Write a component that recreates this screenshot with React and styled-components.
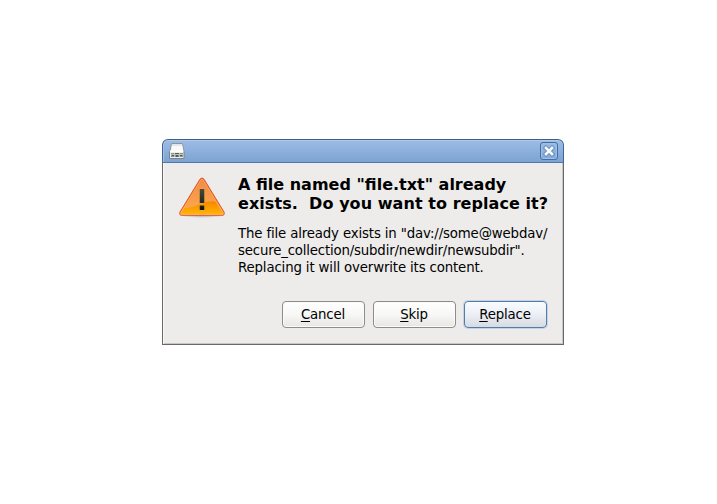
import React from "react";
import styled, { createGlobalStyle } from "styled-components";

const GlobalStyle = createGlobalStyle`
  * { box-sizing: border-box; }
  body { margin: 0; background: #fff; }
`;

const Desktop = styled.main`
  height: 504px;
  padding: 139px 0 0 162px;
  overflow: hidden;
  font-family: "DejaVu Sans", sans-serif;
  color: #000;
`;

const Dialog = styled.section`
  width: 402px;
  height: 206px;
  display: flex;
  flex-direction: column;
`;

const TitleBar = styled.header`
  height: 24px;
  flex: none;
  display: flex;
  justify-content: space-between;
  padding: 2px 5px 0 6px;
  border: 1px solid;
  border-color: #3f5f88 #3f6490 #4c78ad;
  border-radius: 6px 6px 0 0;
  background: linear-gradient(#9dbce5, #8db0dc 50%, #7ba3d2);
  box-shadow: inset 0 1px #b0c9ea, inset 1px 0 #a4c0e4;
`;

const CloseButton = styled.button`
  width: 18px;
  height: 18px;
  padding: 0;
  display: flex;
  border: 1px solid #436da3;
  border-radius: 3px;
  background: linear-gradient(#9abbe3, #83a9d7);
  box-shadow: inset 0 0 0 1px #9fbfe5;
`;

const Content = styled.div`
  flex: 1;
  display: flex;
  flex-direction: column;
  border: 1px solid #696968;
  border-top: 0;
  background: #edeceb;
  box-shadow: inset 1px 0 #f8f8f7, inset -1px -1px #c8c7c5;
`;

const Message = styled.div`
  height: 138px;
  display: flex;
  gap: 12px;
  padding: 12px 0 0 15px;
`;

const Heading = styled.h1`
  margin: 0;
  font-size: 16px;
  line-height: 19px;
  font-weight: 700;
  white-space: pre;
`;

const Details = styled.p`
  margin: 12px 0 0;
  font-size: 13.333px;
  line-height: 17px;
  white-space: pre;
`;

const Line = styled.span`
  display: block;
  letter-spacing: ${(p) => p.$spacing || 0}px;
`;

const Actions = styled.footer`
  display: flex;
  justify-content: flex-end;
  gap: 8px;
  padding-right: 16px;
`;

const Button = styled.button`
  width: 83px;
  height: 27px;
  padding: 0 1px 1px 0;
  border: 1px solid ${(p) => (p.$primary ? "#557ba8" : "#8e8c88")};
  border-radius: 4px;
  background: ${(p) =>
    p.$primary
      ? "linear-gradient(#f8fbff, #eceff4 50%, #d6dbe3)"
      : "linear-gradient(#ffffff, #f7f7f6 50%, #e7e6e4)"};
  box-shadow: ${(p) =>
    p.$primary ? "0 0 0 1px rgba(164, 192, 228, 0.55)" : "inset 0 0 0 1px #fbfbfa"};
  color: #000;
  font: 13.333px "DejaVu Sans", sans-serif;
  letter-spacing: -0.16px;
`;

const Mnemonic = styled.span`
  text-decoration: underline;
  text-decoration-thickness: 1px;
  text-underline-offset: 2px;
`;

const DriveIcon = () => (
  <svg width="16" height="18" viewBox="0 0 16 18" aria-hidden="true">
    <path d="M2.5 1.5h11l1.5 8H1z" fill="#f9f9f8" stroke="#8a96a5" />
    <path d="M3 2h10v2H3z" fill="#e3e5e7" />
    <path d="M.5 9.5h14.5v7H.5z" fill="#eeeeed" stroke="#7c828a" />
    <path d="M1 8.5h13.5v1.5H1z" fill="#fff" />
    <path d="M2 11h12v4H2z" fill="#8e908c" />
    <path d="M5.5 11v4M10.5 11v4M2 12.5h12" stroke="#c0c2be" />
    <path d="M6 11h4v1H6zM7 13h2v2H7zM3 13h2v1H3zM11 13h2v1h-2z" fill="#555854" />
  </svg>
);

const CloseIcon = () => (
  <svg width="16" height="16" viewBox="0 0 16 16" aria-hidden="true">
    <path d="m5 5 6 6m0-6-6 6" stroke="#547eb4" strokeWidth="4.2" strokeLinecap="square" />
    <path d="m5 5 6 6m0-6-6 6" stroke="#f7faff" strokeWidth="2.7" strokeLinecap="square" />
  </svg>
);

const WarningIcon = () => (
  <svg width="48" height="44" viewBox="0 0 48 44" aria-hidden="true">
    <defs>
      <linearGradient id="warning" x2="0" y2="1">
        <stop stopColor="#ef752f" />
        <stop offset=".52" stopColor="#f57900" />
        <stop offset="1" stopColor="#ffb800" />
      </linearGradient>
      <linearGradient id="gloss" x2="0" y2="1">
        <stop stopColor="#f38b48" />
        <stop offset="1" stopColor="#fba64c" />
      </linearGradient>
      <linearGradient id="mark" x2="0" y2="1">
        <stop stopColor="#454a3e" />
        <stop offset="1" stopColor="#141500" />
      </linearGradient>
      <radialGradient id="shade">
        <stop stopColor="#77736e" stopOpacity=".65" />
        <stop offset="1" stopColor="#77736e" stopOpacity="0" />
      </radialGradient>
    </defs>
    <ellipse cx="24" cy="40" rx="24" ry="3" fill="url(#shade)" />
    <path d="M22 4.2Q24 1.6 26 4.2L46 37Q47.2 40.3 43.9 40.3H4.1Q.8 40.3 2 37z" fill="url(#warning)" stroke="#df5434" />
    <path d="M23 5Q24 3.8 25 5L44.8 37.5Q45.5 39.3 43.7 39.3H4.3Q2.5 39.3 3.2 37.5z" fill="none" stroke="#ffb268" />
    <path d="M23.1 5.8q.9-1.2 1.8 0L37.7 26.4Q29 25.5 22 29Q14 33 6.5 33z" fill="url(#gloss)" />
    <path d="M21 13.5h6v15h-6zM21 30h6v5.5h-6z" fill="#ffb04e" opacity=".55" />
    <path d="M21.7 14h4.6v14h-4.6zM21.7 30.4h4.6v4.6h-4.6z" fill="url(#mark)" />
  </svg>
);

export default function App() {
  return (
    <>
      <GlobalStyle />
      <Desktop>
        <Dialog role="dialog">
          <TitleBar>
            <DriveIcon />
            <CloseButton aria-label="Close"><CloseIcon /></CloseButton>
          </TitleBar>
          <Content>
            <Message>
              <WarningIcon />
              <div>
                <Heading>
                  <Line>{'A file named "file.txt" already'}</Line>
                  <Line $spacing={0.06}>{"exists.  Do you want to replace it?"}</Line>
                </Heading>
                <Details>
                  <Line $spacing={-0.155}>{'The file already exists in "dav://some@webdav/'}</Line>
                  <Line $spacing={-0.185}>{'secure_collection/subdir/newdir/newsubdir".'}</Line>
                  <Line $spacing={-0.15}>Replacing it will overwrite its content.</Line>
                </Details>
              </div>
            </Message>
            <Actions>
              <Button><Mnemonic>C</Mnemonic>ancel</Button>
              <Button><Mnemonic>S</Mnemonic>kip</Button>
              <Button $primary><Mnemonic>R</Mnemonic>eplace</Button>
            </Actions>
          </Content>
        </Dialog>
      </Desktop>
    </>
  );
}
